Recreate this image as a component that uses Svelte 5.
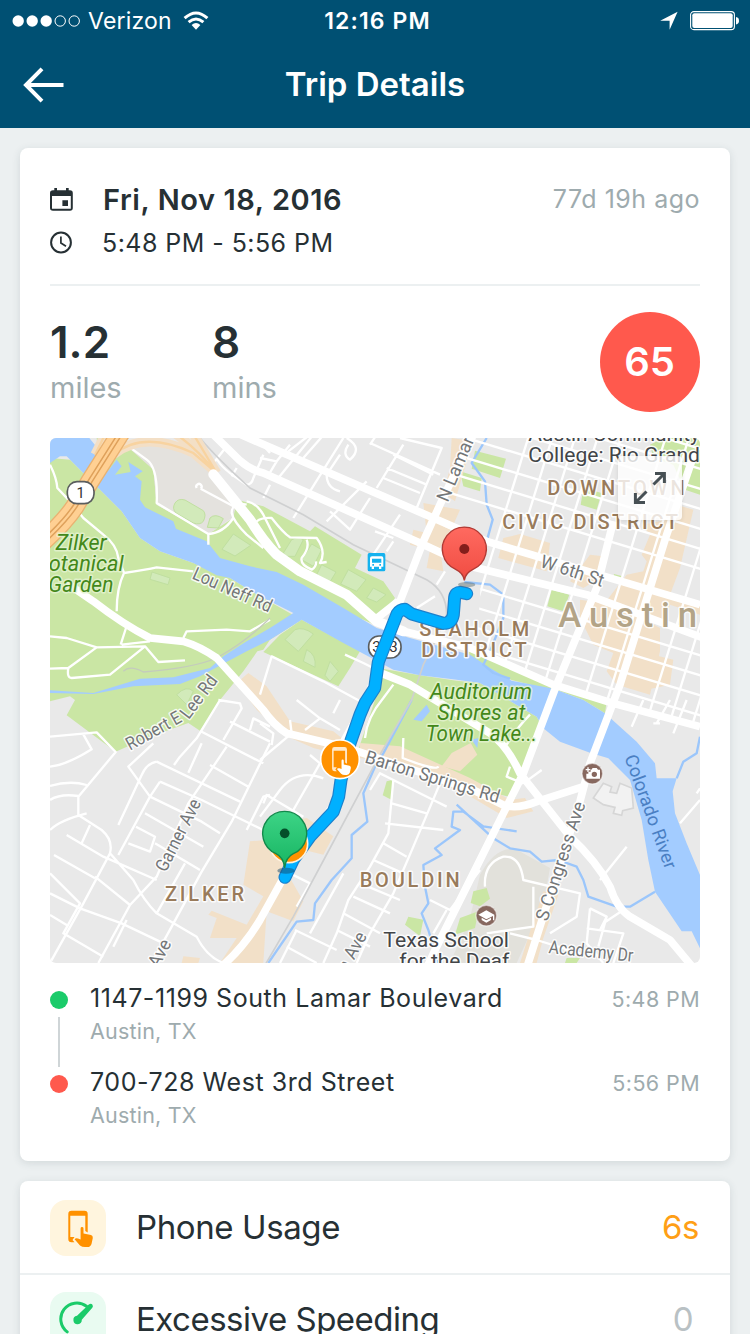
<script>
  const stops = [
    { street: '1147-1199 South Lamar Boulevard', city: 'Austin, TX', time: '5:48 PM', kind: 'start' },
    { street: '700-728 West 3rd Street', city: 'Austin, TX', time: '5:56 PM', kind: 'end' }
  ];

  // Downtown street grid, in map units (three per pixel).
  const avenues = [1300, 1372, 1440, 1508, 1578, 1712, 1782, 1920, 1990, 2060, 2130, 2200];
  const cross = [-300, -240, -180, -120, -60, 0, 60, 120, 180, 290, 440, 500, 560, 620];

  const parks = [
    'M0 60L60 65L105 110L215 220L270 300L330 340L430 375L540 420L630 475L755 545L660 605L640 635L622 640L580 700L510 786L450 878L415 855L290 900L197 941L50 832L75 786L60 775L0 790Z',
    'M755 545L930 640L900 690L865 745L640 642L690 590Z',
    'M140 0L235 20L310 90L320 200L475 288L550 240L560 185L640 205L780 280L795 265L935 350L915 390L1000 430L1035 480L975 560L880 520L760 460L630 410L510 370L370 270L260 220L150 100Z',
    'M985 690L1110 712L1220 728L1290 735L1400 801L1460 836L1480 871L1395 1081L1270 1050L925 935L975 786Z',
    'M1255 640L1330 662L1500 735L1670 790L1665 826L1600 786L1530 760L1480 750L1385 726L1300 690L1255 665Z',
    'M1275 38L1368 62L1350 120L1265 92ZM1600 150L1655 165L1640 215L1592 200ZM1505 455L1558 470L1540 520L1492 505ZM1692 408L1718 415L1712 435L1688 430Z',
    'M1800 20L1840 0L1950 0L1950 170L1905 155L1870 80L1810 60Z',
    'M1230 100L1295 120L1290 160L1240 145ZM1010 1030L1030 1025L1024 1085L998 1072ZM1075 1436L1120 1445L1110 1495L1065 1460Z',
    'M1270 1360L1310 1350L1320 1382L1290 1405L1262 1395ZM1230 1440L1285 1420L1275 1470L1215 1490ZM1550 1560L1590 1560L1580 1575L1545 1575Z'
  ];
  const lawns = [
    'M375 195Q385 180 405 186L460 218Q470 230 460 250Q450 262 430 255L378 225Q365 212 375 195ZM480 240Q495 225 520 242L505 270L472 268ZM550 288L602 322L555 354L516 334Z',
    'M725 305Q745 295 760 305L735 355L708 355L700 345ZM785 318L815 335L790 385L755 365ZM815 380L858 402L840 432L800 410ZM895 395L948 425L920 460L872 438ZM970 450L1008 470L980 492L950 480Z',
    'M735 575Q760 565 790 588L745 640L705 605ZM770 635Q800 650 795 688L760 670ZM840 670L865 700L840 730L825 712ZM306 402L360 420L354 440L300 424ZM380 770Q410 740 430 760L410 800Z'
  ];
  const shops = [
    'M1205 0L1268 10L1250 70L1215 190L1180 165L1200 90ZM1120 195L1230 215L1210 260L1170 330L1180 400L1130 390L1140 335L1080 320L1090 275L1130 285Z',
    'M1360 300L1410 288L1500 315L1490 400L1345 360ZM1620 350L1660 355L1650 420L1600 450L1560 430Z',
    'M1775 260L1830 250L1880 200L1930 215L1890 390L1860 470L1950 500L1950 530L1860 500L1840 560L1720 530L1660 500L1730 410L1780 400L1790 370L1775 350L1800 290Z',
    'M1590 485L1700 500L1830 570L1830 640L1800 770L1700 740L1670 700L1690 645L1630 620L1590 540ZM1810 650L1870 665L1860 740L1790 755Z',
    'M560 735L595 705L650 745L720 850L850 880L900 920L870 950L790 930L700 890L620 815Z',
    'M930 915L1050 925L1260 1020L1380 1085L1425 1080L1450 1120L1370 1140L1260 1075L1050 975L930 960Z',
    'M1205 945L1262 915L1282 950L1230 1000L1175 985Z',
    'M770 1140L850 1195L820 1250L760 1235L720 1320L760 1390L730 1450L650 1420L640 1575L510 1575L560 1500L480 1500L500 1440L475 1430L485 1418L590 1460L640 1375L580 1340L600 1210L660 1205L720 1150Z',
    'M1480 1360L1525 1370L1480 1500L1460 1575L1410 1575L1450 1450ZM400 1555L450 1560L445 1575L395 1575Z'
  ];
  const river =
    'M0 0L118 0L150 40L175 98L200 65L215 85L195 110L242 102L235 72L278 100L255 115L275 130L270 185L285 208L370 250L378 272L470 310L510 360L600 385L680 402L760 440L880 510L980 570L1080 600L1260 650L1320 690L1385 728L1500 750L1530 760L1600 786L1665 826L1760 911L1815 976L1820 1021L1880 1021L1868 1060L1875 1126L1910 1216L1950 1311V1531L1925 1480L1895 1480L1815 1361L1795 1266L1775 1146L1740 1026L1675 961L1620 944L1530 911L1480 871L1460 836L1400 801L1290 735L1220 725L1110 712L1030 695L880 615L755 545L660 605L590 640L450 715L390 738L250 745L130 768L0 765V757L130 765L270 722L370 718L480 690L520 655L590 610L660 570L730 525L630 475L540 420L500 412L430 375L330 340L270 300L215 220L145 150L105 110L70 75L50 55L30 55L0 75Z';
  const creeks =
    'M1085 786L1000 946L975 986L940 1066L952 1151L905 1191V1261L845 1326L795 1396L790 1446L740 1451L655 1575M1400 1180L1300 1165L1240 1121L1210 1121L1205 1166L1230 1176L1155 1231L1175 1251L1120 1281L1125 1346L1135 1396L1115 1426L1135 1476L1165 1575M1220 1100L1330 1201L1380 1231L1440 1241L1475 1271L1525 1266L1580 1286L1600 1326L1615 1376L1700 1406H1740L1815 1361M1310 0L1265 75L1305 130L1310 200L1328 245L1310 310M1243 432L1320 440L1360 470V540L1320 640L1300 680L1330 705L1380 722M1950 896L1940 946L1900 971L1880 1021';
  const mains =
    'M1270 -10L1170 200L1120 310L1050 490L1000 640L950 786L870 930L865 1080L700 1320L630 1446Q580 1530 510 1590M550 -20L660 28L1150 240L1310 310L1950 500M480 -20L570 68Q600 95 640 105L1110 315L1260 385L1610 470L1960 600M975 545L1045 490M1060 580L1260 630L1510 740L1690 796L1950 866M1690 250L1640 450L1520 740L1420 1006L1260 1326L1160 1526L1130 1590M1935 40L1850 290L1710 740L1620 976L1590 1090L1430 1590M50 435L130 490Q220 560 300 600L400 610Q450 625 500 660L640 816Q670 860 710 886L880 926L1270 1056L1360 1101Q1400 1115 1460 1091L1600 1046M980 700L1080 740L1320 886Q1370 920 1410 1006L1560 1196Q1640 1270 1680 1346Q1700 1410 1740 1436L1860 1506L1930 1590';
  const parkway = 'M490 109L600 245Q640 310 680 350L750 400Q830 440 890 470L980 550L1060 580';
  const lanes =
    'M0 80Q20 120 22 150L60 190L100 240L160 290Q200 320 205 360L222 405Q290 395 320 388L430 400M222 405Q200 450 200 520M228 20L290 65Q325 90 320 195L475 288Q520 285 550 240M475 288V320M0 595L50 600L140 628L55 690Q50 720 65 720L180 710L285 625L140 628M215 620L300 610M228 570L212 620M285 625L325 672L405 667M400 600L410 580L530 575L600 580L660 545M0 692L55 690M452 152L560 210M452 152A8 8 0 1 0 440 150M590 200Q545 190 545 225Q550 250 590 290L640 330M590 190Q620 195 640 230L690 330M620 250Q635 238 665 240Q700 285 720 298L800 300Q830 340 810 375L830 372M770 305Q780 330 755 360Q750 380 785 395Q800 385 798 370M630 770L665 655L820 730L950 800M885 650L940 675L1030 720M945 900Q950 840 1000 780L1030 740M1060 900L1058 960Q1160 1000 1165 985M1370 920Q1400 870 1440 830';
  const streets =
    'M0 110L140 97L197 156L85 290V345L155 390Q190 420 180 460L100 610L0 789M0 200Q50 195 125 148L100 103M0 300Q30 280 85 288M0 258Q60 240 110 255M0 390Q30 360 110 340M120 375L95 430M50 405L160 470L320 540M12 465L135 535M0 520L90 610L40 700L160 770M135 530L240 615M90 625L215 670L330 725M0 645L50 675M0 580L90 625M180 460L250 540Q280 600 320 640L440 710Q470 770 520 789M510 0L440 115L390 170L372 195M505 0L570 10L575 25L520 120M310 130L235 200L300 290L205 465M300 290L455 365L510 400M320 185Q290 190 275 225L205 375M320 185L570 305M330 245L455 300L640 390M330 245L300 290M285 340L460 440M258 380L315 410L300 455L235 430M455 95L640 190M540 65L660 125M600 90L610 55L660 80M530 140L415 310L320 530L240 615L145 789M455 130L415 218M660 130L545 365L455 515L365 680L305 789M480 195L595 260M590 390L640 290L660 285M405 490L320 640M315 430L450 510M230 660L190 740';
  const streetsSouth =
    'M110 0L180 55L135 90M220 40L240 0M180 55L240 90M90 60L95 100L0 180M0 70L40 100L35 135M10 310L20 285L130 350M100 330L180 190L150 165M0 350L60 270Q110 205 190 235M330 270L360 220L400 240L520 300L560 320M400 240L385 400L330 500L265 600L230 700L190 789M540 250L460 440L400 580L330 700L290 789M395 310L500 340M375 370L550 390M370 430L440 470M340 480L430 520M300 550L420 600M280 590L390 640M250 640L360 700M230 690L330 740M90 520L150 550L110 620M250 520L150 700M105 690L230 750M110 690L60 789M80 740L170 789M660 510L570 630L510 600M560 630L520 700';
  const streetsEast =
    'M45 560Q40 490 100 470Q150 465 160 540L330 580L320 650L240 700M190 560V680L50 700M390 540L470 440M360 625L350 730L400 789M360 625L410 650L385 740M350 685L460 700L430 789M400 670L460 630M410 650L390 690M160 250L110 230L120 200M160 250L215 210M120 700L200 720L330 760M630 370L690 300M690 265L680 280M485 80L520 0M560 70L600 0M610 100L650 0M550 70H570';
  const streetsNorth =
    'M0 60L50 70L20 120M50 70L90 20M85 40L150 -10M130 60L200 -20M55 120L160 -10M100 240L250 0M200 250L320 130M210 220L270 275L330 180M260 0Q310 30 270 65Q245 50 265 20M240 50L200 110Q200 150 240 160M330 15L540 110M420 0L545 30L470 210M430 20L350 150M400 50L520 110M380 90L500 140M370 120L480 165M330 20L350 -10M340 350L420 230M380 340L400 310M345 280L400 300M530 440L555 400M470 510L525 475';
  const streetsNW =
    'M495 70L530 25M500 60Q510 90 590 140Q605 140 610 120L640 50M620 0L660 45M560 90L545 115M640 180L660 140';
  const rail =
    'M450 0Q500 60 600 150L760 230L910 320L1130 425Q1190 460 1190 530L1165 590L1120 680L1085 786L990 950L805 1296L730 1436L640 1590';
  const route =
    'M705 1318L730 1265L780 1196L850 1121L866 1076L873 1026L900 916L930 830L945 795L974 750L985 672L1041 528Q1050 514 1065 514L1085 528L1180 556Q1205 556 1210 530L1214 478Q1216 463 1232 463L1250 467';
  const touch =
    'M21.7 24V5.400Q21.7 2.200 18.500 2.200H5.500Q2.300 2.200 2.300 5.400V30.600Q2.300 33.800 5.500 33.800H8.500L6.500 31.500L8.500 28.500H4.300V7.200H19.300V22.500Z';
  const finger =
    'M14.600 20Q14.600 18.600 16 18.600Q17.500 18.600 17.500 20V25L25 26.600Q27 27.200 26.800 29.500L25.500 35.500Q24.500 38.600 21.500 38.600H19Q16 38.600 14 37L8.600 30.800Q9.600 29.200 12 30L14.600 31Z';
  const highway = 'M215 -20L120 130L75 205Q45 250 -20 310';
  const ramps = 'M135 50L170 -20M190 50Q280 -25 430 45L500 105M365 -20Q430 20 500 105M425 -20L500 105';
</script>

<div class="screen">
  <header>
    <div class="status">
      <div class="carrier">
        <svg width="70" height="14" viewBox="0 0 70 14">
          {#each [0, 1, 2] as i}<circle cx={6.2 + i * 14} cy="7" r="5.7" fill="#fff" />{/each}
          {#each [3, 4] as i}<circle cx={6.2 + i * 14} cy="7" r="5.2" fill="none" stroke="#fff" />{/each}
        </svg>
        <span class="net">Verizon</span>
        <svg width="26" height="20" viewBox="0 0 26 20">
          <path d="M1.6 7.2Q13-3.2 24.4 7.2M5.6 11.2Q13 4.8 20.4 11.2" fill="none" stroke="#fff" stroke-width="3" />
          <path d="M8.6 14Q13 10.2 17.4 14L13 18.8Z" fill="#fff" />
        </svg>
      </div>
      <span class="clock">12:16 PM</span>
      <div class="power">
        <svg width="20" height="20" viewBox="0 0 20 20"><path d="M18.6.8L10.6 18.8V9.8H1.2Z" fill="#fff" /></svg>
        <svg width="50" height="20" viewBox="0 0 50 20">
          <rect x=".6" y=".6" width="43.8" height="18" rx="3.2" fill="none" stroke="#fff" stroke-width="1.1" />
          <rect x="2.3" y="2.3" width="40.4" height="14.6" rx="2" fill="#fff" />
          <path d="M46 6Q49 6.400 49 9.700Q49 13 46 13.400Z" fill="#fff" />
        </svg>
      </div>
    </div>
    <div class="nav">
      <svg width="42" height="36" viewBox="0 0 42 36"><path d="M40.500 18H3M19 1.800L3 18L19 34.200" fill="none" stroke="#fff" stroke-width="4" /></svg>
      <h1>Trip Details</h1>
      <span></span>
    </div>
  </header>

  <main>
    <section class="card trip">
      <div class="when">
        <div class="line">
          <svg width="24" height="24" viewBox="0 0 24 24">
            <path fill-rule="evenodd" d="M3 2.200H4.300V0H7V2.200H16V0H18.700V2.200H20Q22.800 2.200 22.800 5V20Q22.800 22.800 20 22.800H3Q0 22.800 0 20V5Q0 2.200 3 2.200ZM2 8V20.800H20.800V8ZM12.400 12.300H18V18H12.400Z" fill="#263034" />
          </svg>
          <strong class="date">Fri, Nov 18, 2016</strong>
          <span class="ago">77d 19h ago</span>
        </div>
        <div class="line">
          <svg width="24" height="24" viewBox="0 0 24 24">
            <circle cx="11" cy="11.500" r="9.900" fill="none" stroke="#263034" stroke-width="2" />
            <path d="M10.900 5.500V12L16 15.200" fill="none" stroke="#263034" stroke-width="1.700" />
          </svg>
          <span class="span">5:48 PM - 5:56 PM</span>
        </div>
      </div>

      <div class="stats">
        <div class="stat first"><b>1.2</b><span>miles</span></div>
        <div class="stat"><b>8</b><span class="mins">mins</span></div>
        <div class="score">65</div>
      </div>

      <div class="map">
        <svg width="650" height="525" viewBox="0 0 1950 1575">
          <defs>
            <clipPath id="downtown"><path d="M1290 0H1950V860L1700 790L1510 730L1280 630L1300 320L1170 260L1275 0Z" /></clipPath>
            <linearGradient id="pinGreen" x2="0" y2="1"><stop stop-color="#3dd486" /><stop offset="1" stop-color="#17b562" /></linearGradient>
            <linearGradient id="pinRed" x2="0" y2="1"><stop stop-color="#ff6a60" /><stop offset="1" stop-color="#f04c42" /></linearGradient>
          </defs>
          <rect width="1950" height="1575" fill="#e9e9e9" />
          <path d="M1290 1310Q1340 1220 1400 1235L1500 1290L1480 1400L1400 1575H1200L1260 1440Z" fill="#e2e1db" />
          {#each parks as d}<path {d} fill="#cae6a4" />{/each}
          <path d="M220 15L300 10L420 40L500 110L560 200L545 240L475 288L320 200L310 95Z" fill="#e4e2de" />
          {#each lawns as d}<path {d} fill="#d2eaba" stroke="#c0dfa0" stroke-width="3" />{/each}
          {#each shops as d}<path {d} fill="#f2e0c8" />{/each}
          <path d={river} fill="#a3ccff" />
          <path d="M1090 845L1130 800L1140 820L1115 850ZM1265 905L1285 900L1282 930Z" fill="#a3ccff" />
          <path d={creeks} fill="none" stroke="#9bc6fb" stroke-width="7" stroke-linejoin="round" />

          <g class="road" stroke-width="7">
            <g clip-path="url(#downtown)">
              {#each avenues as x}<path d="M{x + 150} -50L{x - 130} 850" />{/each}
              {#each cross as y}<path d="M1150 {y - 30}L1960 {y + 215}" />{/each}
            </g>
            <path d={streetsNW} />
            <path d={lanes} />
            <g transform="translate(630 0)"><path d={streetsNorth} /></g>
            <g transform="translate(0 786)"><path d={streets} /></g>
            <g transform="translate(630 786)"><path d={streetsSouth} /></g>
            <g transform="translate(1260 786)"><path d={streetsEast} /></g>
          </g>
          <path d={rail} fill="none" stroke="#cfd0d1" stroke-width="5" />
          <path d="M220 700Q240 680 280 702Q430 690 500 660Q590 610 660 540" fill="none" stroke="#c4cbbd" stroke-width="4" />
          <path d={ramps} fill="none" stroke="#f3dfc6" stroke-width="28" stroke-linejoin="round" />
          <path d={ramps} fill="none" stroke="#f8d3a0" stroke-width="7" />
          <g class="road" stroke-width="23">
            <path d={mains} />
            <path d={parkway} stroke-width="30" stroke-linecap="round" />
          </g>
          <path d={highway} fill="none" stroke="#e9b272" stroke-width="58" />
          <path d={highway} fill="none" stroke="#ffd093" stroke-width="50" />
          <path d={highway} fill="none" stroke="#dfa15b" stroke-width="16" />
          <path d={highway} fill="none" stroke="#ffd093" stroke-width="7" />
          <path d="M1630 1080L1660 1036L1685 1046L1680 1062L1700 1066L1710 1036L1745 1050L1750 1110L1718 1118L1715 1132L1690 1126L1695 1108L1660 1100Z" fill="#f2f2f2" stroke="#d6d6d6" stroke-width="5" />

          <rect x="52" y="131" width="80" height="66" rx="29" fill="#fff" stroke="#5a5d5e" stroke-width="5" />
          <text x="92" y="181" font-size="44" text-anchor="middle" fill="#333">1</text>
          <rect x="956" y="594" width="97" height="66" rx="31" fill="#fff" stroke="#5a5d5e" stroke-width="5" />
          <text x="1005" y="643" font-size="45" text-anchor="middle" fill="#333">343</text>
          <rect x="953" y="345" width="53" height="55" rx="5" fill="#15b2ee" />
          <path fill-rule="evenodd" d="M966 355H995Q1000 355 1000 361V386H994V393H987V386H972V393H965V386H960V361Q960 355 966 355ZM966 362V374H994V362ZM967 378H972V383H967ZM988 378H993V383H988Z" fill="#fff" />

          <g class="label green">
            <text x="17" y="335" textLength="153" lengthAdjust="spacingAndGlyphs">Zilker</text>
            <text x="-4" y="399" textLength="225" lengthAdjust="spacingAndGlyphs">otanical</text>
            <text x="-5" y="462" textLength="195" lengthAdjust="spacingAndGlyphs">Garden</text>
            <text x="1140" y="783" textLength="306" lengthAdjust="spacingAndGlyphs">Auditorium</text>
            <text x="1162" y="846" textLength="264" lengthAdjust="spacingAndGlyphs">Shores at</text>
            <text x="1127" y="909" textLength="334" lengthAdjust="spacingAndGlyphs">Town Lake...</text>
          </g>
          <g class="label grey">
            <text transform="translate(424 421) rotate(24)" textLength="254" lengthAdjust="spacingAndGlyphs">Lou Neff Rd</text>
            <text transform="translate(1193 195) rotate(-67)" textLength="207" lengthAdjust="spacingAndGlyphs">N Lamar</text>
            <text transform="translate(1468 386) rotate(18)" textLength="197" lengthAdjust="spacingAndGlyphs">W 6th St</text>
            <text transform="translate(240 938) rotate(-29)" textLength="182" lengthAdjust="spacingAndGlyphs">Robert E</text>
            <text transform="translate(416 846) rotate(-53)" textLength="148" lengthAdjust="spacingAndGlyphs">Lee Rd</text>
            <text transform="translate(347 1305) rotate(-63)" textLength="236" lengthAdjust="spacingAndGlyphs">Garner Ave</text>
            <text transform="translate(942 973) rotate(17)" textLength="419" lengthAdjust="spacingAndGlyphs">Barton Springs Rd</text>
            <text transform="translate(1492 1452) rotate(-72)" textLength="372" lengthAdjust="spacingAndGlyphs">S Congress Ave</text>
            <text transform="translate(1495 1545) rotate(6)" textLength="254" lengthAdjust="spacingAndGlyphs">Academy Dr</text>
            <text transform="translate(325 1592) rotate(-62)" textLength="86" lengthAdjust="spacingAndGlyphs">Ave</text>
            <text transform="translate(893 1604) rotate(-62)" textLength="125" lengthAdjust="spacingAndGlyphs">n Ave</text>
          </g>
          <text class="water" transform="translate(1723 958) rotate(70)" textLength="360" lengthAdjust="spacingAndGlyphs">Colorado River</text>
          <g class="label brown">
            <text x="1492" y="172" textLength="412">DOWNTOWN</text>
            <text x="1357" y="272" textLength="527">CIVIC DISTRICT</text>
            <text x="1108" y="594" textLength="330">SEAHOLM</text>
            <text x="1114" y="657" textLength="316">DISTRICT</text>
            <text x="345" y="1389" textLength="237">ZILKER</text>
            <text x="929" y="1347" textLength="300">BOULDIN</text>
          </g>
          <text class="label city" x="1525" y="568" textLength="416">Austin</text>
          <g class="label dark">
            <text x="1435" y="10" textLength="515" lengthAdjust="spacingAndGlyphs">Austin Community</text>
            <text x="1435" y="72" textLength="515" lengthAdjust="spacingAndGlyphs">College: Rio Grand</text>
            <text x="1000" y="1527" textLength="377" lengthAdjust="spacingAndGlyphs">Texas School</text>
            <text x="1048" y="1590" textLength="330" lengthAdjust="spacingAndGlyphs">for the Deaf</text>
          </g>

          <circle cx="1627" cy="1007" r="31" fill="#87685f" stroke="#fff" stroke-opacity=".5" stroke-width="4" />
          <path fill-rule="evenodd" d="M1624 995L1628 990H1640L1644 995H1650V1022H1609V1007H1615V1001H1622V995ZM1633 1001A8 8 0 1 0 1633 1017A8 8 0 1 0 1633 1001ZM1612 988H1616V993H1621V997H1616V1002H1612V997H1607V993H1612Z" fill="#fff" />
          <circle cx="1309" cy="1433" r="31" fill="#87685f" stroke="#fff" stroke-opacity=".5" stroke-width="4" />
          <path d="M1309 1417L1333 1430V1447H1329V1434L1309 1444L1285 1430ZM1295 1439L1309 1447L1323 1439V1446L1309 1454L1295 1446Z" fill="#fff" />

          <g fill="none" stroke-linejoin="round" stroke-linecap="round">
            <path d={route} stroke="#1c80cc" stroke-width="39" />
            <path d={route} stroke="#00b0ff" stroke-width="32" />
          </g>

          <circle cx="716" cy="1217" r="57" fill="#ff9100" stroke="#fff3df" stroke-width="5" />
          <circle cx="870" cy="964" r="58" fill="#ff9100" stroke="#fff" stroke-width="5" />
          <g transform="translate(841 922) scale(2.300)" fill="#fff"><path d={touch} fill-opacity=".8" /><path d={finger} /></g>

          <ellipse cx="708" cy="1298" rx="26" ry="9" fill="#17496b" opacity=".5" />
          <path d="M704 1290Q701 1258 678 1247A66 66 0 1 1 730 1247Q707 1258 704 1290Z" fill="url(#pinGreen)" stroke="#12894b" stroke-width="4" />
          <circle cx="704" cy="1186" r="14.500" fill="#04502a" />
          <ellipse cx="1250" cy="440" rx="26" ry="8" fill="#566" opacity=".45" />
          <path d="M1243 427Q1240 405 1217 394A66 66 0 1 1 1269 394Q1246 405 1243 427Z" fill="url(#pinRed)" stroke="#b23a34" stroke-width="4" />
          <circle cx="1243" cy="333" r="15" fill="#841e1b" />
        </svg>
        <button aria-label="Expand map">
          <svg width="64" height="64" viewBox="0 0 64 64"><path d="M35.500 28.500L46 18M37 17.400H46.400V27M28.500 35.500L18 46M17.400 37V46.400H27" fill="none" stroke="#475054" stroke-width="3" /></svg>
        </button>
      </div>

      <div class="stops">
        {#each stops as stop}
          <div class="stop">
            <div class="rail"><i class={stop.kind}></i>{#if stop.kind === 'start'}<em></em>{/if}</div>
            <div class="place"><span class="street">{stop.street}</span><span class="town">{stop.city}</span></div>
            <time>{stop.time}</time>
          </div>
        {/each}
      </div>
    </section>

    <section class="card events">
      <div class="event">
        <div class="icon amber">
          <svg width="56" height="56" viewBox="0 0 56 56"><g transform="translate(16 8.500)" fill="#ff9100"><path d={touch} /><path d={finger} /></g></svg>
        </div>
        <span class="name usage">Phone Usage</span>
        <span class="value on">6s</span>
      </div>
      <div class="event">
        <div class="icon mint">
          <svg width="56" height="56" viewBox="0 0 56 56">
            <path d="M17.200 39.900A16 16 0 0 1 36.500 14.200" fill="none" stroke="#1bcb6a" stroke-width="3" stroke-linecap="round" />
            <path d="M38.800 12.600Q40.800 11 42.300 12.400Q43.600 14 42.300 15.800L31.800 27.800A4.200 4.200 0 1 1 27 23.800Z" fill="#1bcb6a" />
          </svg>
        </div>
        <span class="name speeding">Excessive Speeding</span>
        <span class="value none">0</span>
      </div>
    </section>
  </main>
</div>

<style>
  :global(body) { background: #ecf0f1; overflow: hidden; }
  .screen { width: 750px; height: 1334px; overflow: hidden; background: #ecf0f1; color: #263034; font-family: Inter, sans-serif; }
  svg { display: block; flex: none; }
  header { height: 128px; background: #005073; color: #fff; }
  .status { height: 41px; display: grid; grid-template-columns: 1fr auto 1fr; align-items: center; font-size: 23px; line-height: 42px; }
  .carrier { display: flex; align-items: center; padding-left: 12px; }
  .net { margin: 0 11px 0 6px; letter-spacing: .2px; }
  .clock { font-weight: 600; letter-spacing: 1.1px; padding-left: 5px; }
  .power { display: flex; justify-content: flex-end; gap: 11px; padding-right: 10px; }
  .nav { height: 87px; display: grid; grid-template-columns: 1fr auto 1fr; align-items: center; padding: 0 23px; }
  h1 { margin: 0; font-size: 33px; font-weight: 600; line-height: 87px; }
  main { padding: 20px; display: flex; flex-direction: column; gap: 20px; }
  .card { flex: none; background: #fff; border-radius: 8px; box-shadow: 0 2px 8px rgba(40, 60, 70, .13); }
  .trip { height: 1013px; padding: 0 30px; box-sizing: border-box; }
  .when { padding-top: 30px; height: 106px; border-bottom: 2px solid #ecf0f1; }
  .line { display: flex; align-items: center; height: 43px; }
  .date { margin-left: 29px; font-size: 29px; font-weight: 600; letter-spacing: .58px; }
  .ago { margin-left: auto; font-size: 25px; color: #9eabae; letter-spacing: .5px; line-height: 30px; padding-bottom: 2px; }
  .span { margin-left: 28px; font-size: 25px; letter-spacing: .45px; }
  .stats { display: flex; height: 152px; padding-top: 26px; box-sizing: border-box; }
  .stat { display: flex; flex-direction: column; }
  .first { width: 162px; }
  .stat b { font-size: 44px; font-weight: 600; line-height: 60px; height: 62px; }
  .stat span { font-size: 29px; line-height: 28px; color: #9eabae; }
  .score { margin-left: auto; width: 100px; height: 100px; border-radius: 50%; background: #ff594d; color: #fff; font-size: 40px; font-weight: 600; line-height: 99px; text-align: center; text-indent: -1px; }
  .map { position: relative; height: 525px; border-radius: 6px; overflow: hidden; font-family: Roboto, sans-serif; }
  .road path { fill: none; stroke: #fff; stroke-linejoin: round; }
  .label { paint-order: stroke; stroke: #fff; stroke-opacity: .85; stroke-width: 9px; stroke-linejoin: round; }
  .green { font-size: 65px; font-style: italic; fill: #43881a; stroke: #e3f3cf; }
  .grey { font-size: 55px; fill: #737678; }
  .brown { font-size: 60px; font-weight: 500; fill: #997b5b; }
  .city { font-size: 104px; font-weight: 500; fill: #b3a487; }
  .dark { font-size: 63px; fill: #424548; }
  .water { font-size: 55px; fill: #4a7fc3; }
  button { position: absolute; top: 18px; right: 18px; padding: 0; border: 0; border-radius: 4px; background: rgba(255, 255, 255, .8); box-shadow: 0 1px 4px rgba(0, 0, 0, .1); }
  .stops { padding-top: 17px; }
  .stop { display: flex; height: 84px; }
  .rail { width: 18px; display: flex; flex-direction: column; align-items: center; padding-top: 11px; }
  .rail i { flex: none; width: 18px; height: 18px; border-radius: 50%; background: #1bcb6a; }
  .rail i.end { background: #ff594d; }
  .rail em { flex: none; width: 2px; height: 50px; margin-top: 8px; background: #cfd5d7; }
  .place { display: flex; flex-direction: column; margin-left: 22px; flex: 1; }
  .street { font-size: 25px; line-height: 36px; letter-spacing: .56px; }
  .town { font-size: 21.500px; line-height: 31px; color: #9eabae; letter-spacing: .2px; }
  time { font-size: 21.500px; line-height: 39px; color: #9eabae; letter-spacing: .4px; }
  .event { display: flex; align-items: center; height: 92px; padding: 0 30px; }
  .event + .event { border-top: 2px solid #ecf0f1; height: 90px; }
  .icon { width: 56px; height: 56px; border-radius: 16px; overflow: hidden; }
  .amber { background: #fff5de; margin-top: 2px; }
  .mint { background: #e9fbf1; }
  .name { margin-left: 30px; font-size: 33px; line-height: 40px; letter-spacing: -.4px; }
  .speeding { letter-spacing: -.5px; padding-bottom: 2px; }
  .value { margin-left: auto; font-size: 33px; line-height: 40px; color: #b9c1c4; letter-spacing: -.5px; }
  .on { color: #ff9f16; padding-right: 1px; }
  .none { padding: 0 7px 2px 0; }
</style>
